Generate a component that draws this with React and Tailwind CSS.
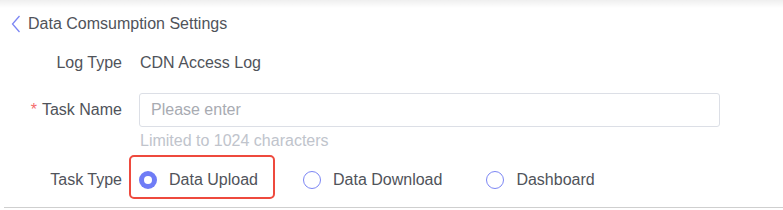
import React from "react";

function Radio({ checked, label }) {
  return (
    <label className="flex items-center">
      {checked ? (
        <span className="w-[18px] h-[18px] rounded-full bg-[#6f7cf6] flex items-center justify-center">
          <span className="w-[8px] h-[8px] rounded-full bg-white" />
        </span>
      ) : (
        <span className="w-[18px] h-[18px] rounded-full border border-[#7c86f4] bg-white" />
      )}
      <span className="ml-[12px] text-[16px] text-[#50535a]">{label}</span>
    </label>
  );
}

export default function App() {
  return (
    <div
      className="relative w-[783px] h-[210px] bg-white overflow-hidden"
      style={{ fontFamily: '"Liberation Sans", Arial, sans-serif' }}
    >
      <div className="h-[8px] bg-gradient-to-b from-[#efefef] to-white" />
      <div className="flex items-center h-[32px] pl-[11px]">
        <svg width="10" height="18" viewBox="0 0 10 18" fill="none">
          <path d="M8.5 1L1.5 9L8.5 17" stroke="#7c86f4" strokeWidth="1.3" />
        </svg>
        <span className="ml-[7px] text-[16px] text-[#50535a]">Data Comsumption Settings</span>
      </div>
      <div className="flex items-center h-[38px] mt-[4px]">
        <div className="w-[122px] text-right text-[16px] text-[#50535a]">Log Type</div>
        <div className="ml-[18px] text-[16px] text-[#50535a]">CDN Access Log</div>
      </div>
      <div className="flex items-center mt-[11px]">
        <div className="w-[122px] text-right text-[16px] text-[#50535a]">
          <span className="text-[#f56c6c] mr-[5px]">*</span>Task Name
        </div>
        <div className="ml-[17px] w-[581px] h-[34px] border border-[#dcdfe6] rounded-[3px] flex items-center pl-[11px] text-[16px] text-[#a8abb2]">
          Please enter
        </div>
      </div>
      <div className="ml-[140px] mt-[4px] text-[16px] text-[#c0c4cc] leading-[20px]">
        Limited to 1024 characters
      </div>
      <div className="flex items-center mt-[10px]">
        <div className="w-[122px] text-right text-[16px] text-[#50535a]">Task Type</div>
        <div className="ml-[7px] -mt-[6px] w-[146px] h-[44px] border-2 border-[#ee4a3e] rounded-[5px] flex items-center pl-[8px] pt-[6px]">
          <Radio checked label="Data Upload" />
        </div>
        <div className="ml-[28px]">
          <Radio label="Data Download" />
        </div>
        <div className="ml-[44px]">
          <Radio label="Dashboard" />
        </div>
      </div>
      <div className="absolute left-[4px] right-0 top-[207px] h-[1px] bg-[#cfcfcf]" />
    </div>
  );
}
